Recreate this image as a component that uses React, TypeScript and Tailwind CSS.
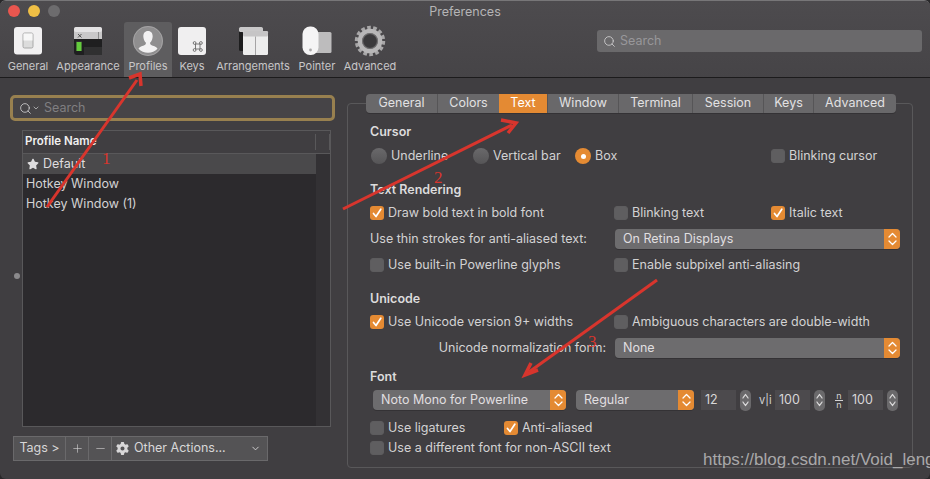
import React from "react";
import { Search, ChevronDown, Plus, Minus } from "lucide-react";
import { FaGear, FaStar } from "react-icons/fa6";

const Updown = ({ className = "" }: { className?: string }) => (
  <svg width="9" height="14" viewBox="0 0 9 14" fill="none" stroke="currentColor" strokeWidth="1.3" strokeLinecap="round" strokeLinejoin="round" className={className}>
    <path d="M1 5 L4.5 1.5 L8 5" />
    <path d="M1 9 L4.5 12.5 L8 9" />
  </svg>
);

const Check = () => (
  <svg width="10" height="10" viewBox="0 0 10 10" fill="none" stroke="#fff" strokeWidth="1.7" strokeLinecap="round" strokeLinejoin="round">
    <path d="M1.5 5.5 L4 8.5 L8.8 1.2" />
  </svg>
);

const Checkbox = ({ on, label }: { on?: boolean; label: string }) => (
  <div className="flex items-center gap-[4px] whitespace-nowrap">
    {on ? (
      <span className="flex h-[14px] w-[14px] items-center justify-center rounded-[3px] bg-[#e48a33]"><Check /></span>
    ) : (
      <span className="h-[14px] w-[14px] rounded-[3px] border border-[#5d5c5e] bg-[#5f5e60]" />
    )}
    <span>{label}</span>
  </div>
);

const Radio = ({ on, label }: { on?: boolean; label: string }) => (
  <div className="flex items-center gap-[4px] whitespace-nowrap">
    {on ? (
      <span className="flex h-[16px] w-[16px] items-center justify-center rounded-full bg-[#e58b33]"><span className="h-[5px] w-[5px] rounded-full bg-white" /></span>
    ) : (
      <span className="h-[16px] w-[16px] rounded-full bg-gradient-to-b from-[#6a696b] to-[#565557]" />
    )}
    <span>{label}</span>
  </div>
);

const Select = ({ label, className }: { label: string; className: string }) => (
  <div className={`flex h-[20px] items-stretch overflow-hidden rounded-[4px] bg-[#6d6c6e] shadow-[0_1px_0_#343235] ${className}`}>
    <span className="flex-1 self-center pl-[8px] text-[#e0dfe0]">{label}</span>
    <span className="flex w-[16px] items-center justify-center bg-[#e48a33] text-white"><Updown /></span>
  </div>
);

const Stepper = () => (
  <span className="flex h-[21px] w-[11px] items-center justify-center rounded-[5px] bg-[#6a696b] text-[#dddcdd]"><Updown className="scale-x-75" /></span>
);

const NumField = ({ value }: { value: string }) => (
  <span className="flex h-[20px] w-[35px] items-center bg-[#4c4a4d] pl-[4px] text-[#d8d7d8]">{value}</span>
);

const Heading = ({ children, className }: { children: React.ReactNode; className: string }) => (
  <div className={`h-[16px] font-semibold leading-[16px] text-[#dcdbdc] ${className}`}>{children}</div>
);

const GeneralIcon = () => (
  <svg width="32" height="32" viewBox="0 0 32 32">
    <rect x="2" y="2" width="28" height="27.5" rx="3" fill="#f1f0f1" />
    <rect x="11" y="8" width="10" height="15" rx="1.5" fill="#dcdcdc" stroke="#9a999a" strokeWidth="0.8" />
    <rect x="11.5" y="8.5" width="9" height="7" fill="#f7f7f7" />
  </svg>
);
const AppearanceIcon = () => (
  <svg width="32" height="32" viewBox="0 0 32 32">
    <rect x="2" y="2" width="28" height="28" rx="3" fill="#1f1f20" />
    <path d="M2 14 V5 a3 3 0 0 1 3-3 H27 a3 3 0 0 1 3 3 V14 Z" fill="#c9c8c9" />
    <rect x="2" y="2" width="28" height="5" rx="2" fill="#e4e3e4" />
    <path d="M6 9 L9.5 12.5 M9.5 9 L6 12.5" stroke="#444" strokeWidth="0.9" />
    <rect x="26" y="7" width="1" height="7" fill="#8a8a8a" />
    <rect x="4" y="16" width="6" height="10" fill="#2e2e2e" />
    <rect x="4.5" y="17" width="5" height="9" fill="#64cc3d" />
    <rect x="12" y="22" width="18" height="8" fill="#303031" />
  </svg>
);
const ProfilesIcon = () => (
  <svg width="32" height="32" viewBox="0 0 32 32">
    <circle cx="16" cy="16" r="15" fill="#8f8e8f" />
    <circle cx="16" cy="16" r="14.5" fill="none" stroke="#a8a7a8" strokeWidth="0.8" />
    <path d="M16 6 c3.6 0 5 3 4.6 6.2 c-0.3 2.5-1.3 4.3-2.4 5.3 c-0.5 1.6 0.6 2.6 2.6 3.2 c2.5 0.8 4 1.6 4.7 3 a13 13 0 0 1-19 0 c0.7-1.4 2.2-2.2 4.7-3 c2-0.6 3.1-1.6 2.6-3.2 c-1.1-1-2.1-2.8-2.4-5.3 C11 9 12.4 6 16 6 Z" fill="#f2f1f2" />
  </svg>
);
const KeysIcon = () => (
  <svg width="32" height="32" viewBox="0 0 32 32">
    <rect x="2" y="2" width="28" height="28" rx="3" fill="#f0eff0" />
    <g fill="none" stroke="#6a6a6a" strokeWidth="0.9">
      <rect x="19.5" y="19" width="4.5" height="5" />
      <circle cx="18.6" cy="18" r="1.4" />
      <circle cx="24.9" cy="18" r="1.4" />
      <circle cx="18.6" cy="25" r="1.4" />
      <circle cx="24.9" cy="25" r="1.4" />
    </g>
  </svg>
);
const ArrangementsIcon = () => (
  <svg width="32" height="32" viewBox="0 0 32 32">
    <rect x="2" y="2" width="24" height="24" rx="1.5" fill="#1d1d1e" />
    <rect x="2" y="2" width="24" height="5" rx="1.5" fill="#c9c8c9" />
    <rect x="6" y="6" width="25" height="24" rx="1.5" fill="#ededed" />
    <rect x="6" y="6" width="25" height="5.5" rx="1.5" fill="#c6c5c6" />
    <rect x="18" y="11.5" width="0.9" height="18.5" fill="#9d9c9d" />
  </svg>
);
const PointerIcon = () => (
  <svg width="32" height="32" viewBox="0 0 32 32">
    <rect x="14" y="7" width="16.5" height="21" rx="1.5" fill="#bdbcbd" />
    <rect x="1.5" y="1.5" width="16" height="28.5" rx="7.5" fill="#f5f4f5" />
    <circle cx="9.5" cy="25" r="1.4" fill="#a9a8a9" />
  </svg>
);
const AdvancedIcon = () => (
  <svg width="32" height="32" viewBox="0 0 32 32" fill="none">
    <circle cx="16" cy="16" r="13.2" stroke="#a8a7a8" strokeWidth="4" strokeDasharray="3.6 2.3" />
    <circle cx="16" cy="16" r="10" stroke="#b8b7b8" strokeWidth="4.6" />
    <circle cx="16" cy="16" r="7.5" stroke="#6f6e6f" strokeWidth="1.2" />
    <circle cx="16" cy="16" r="6.5" fill="#3b3a3c" />
  </svg>
);

const toolbar: { label: string; icon: React.ReactNode; w: string; active?: boolean }[] = [
  { label: "General", icon: <GeneralIcon />, w: "w-[48px]" },
  { label: "Appearance", icon: <AppearanceIcon />, w: "w-[72px]" },
  { label: "Profiles", icon: <ProfilesIcon />, w: "w-[48px]", active: true },
  { label: "Keys", icon: <KeysIcon />, w: "w-[40px]" },
  { label: "Arrangements", icon: <ArrangementsIcon />, w: "w-[82px]" },
  { label: "Pointer", icon: <PointerIcon />, w: "w-[46px]" },
  { label: "Advanced", icon: <AdvancedIcon />, w: "w-[60px]" },
];

const tabs: { label: string; w: string; active?: boolean }[] = [
  { label: "General", w: "w-[71px]" },
  { label: "Colors", w: "w-[62px]" },
  { label: "Text", w: "w-[48px]", active: true },
  { label: "Window", w: "w-[71px]" },
  { label: "Terminal", w: "w-[74px]" },
  { label: "Session", w: "w-[71px]" },
  { label: "Keys", w: "w-[50px]" },
  { label: "Advanced", w: "w-[83px]" },
];

export default function App() {
  return (
    <div className="relative h-[479px] w-[930px] overflow-hidden bg-[#29282a] font-['Inter','Liberation_Sans',sans-serif] text-[12.5px] text-[#d3d2d3]">
      <div className="flex h-full w-full flex-col overflow-hidden rounded-[6px] border-t border-[#777678] bg-[#403e41]">
        <header className="h-[77px] shrink-0 border-b border-[#1c1b1c] bg-gradient-to-b from-[#4d4b4e] to-[#464447]">
          <div className="relative flex h-[21px] items-center justify-center text-[12.5px] text-[#b5b4b5]">
            <div className="absolute left-[8px] top-[4px] flex gap-[8px]">
              <span className="h-[12px] w-[12px] rounded-full bg-[#e9564f]" />
              <span className="h-[12px] w-[12px] rounded-full bg-[#efbf45]" />
              <span className="h-[12px] w-[12px] rounded-full bg-[#6d6c6e]" />
            </div>
            <span className="pt-[2px]">Preferences</span>
          </div>
          <div className="flex h-[55px] pl-[4px]">
            {toolbar.map((t) => (
              <div key={t.label} className={`flex flex-col items-center whitespace-nowrap rounded-t-[3px] pt-[3px] text-[11px] text-[#c8c7c8] ${t.w} ${t.active ? "bg-[#5e5d5f]" : ""}`}>
                {t.icon}
                <span className="mt-[2px] leading-[14px]">{t.label}</span>
              </div>
            ))}
            <div className="ml-auto mr-[8px] mt-[8px] flex h-[22px] w-[325px] items-center rounded-[3px] bg-[#6a696b] pl-[6px] text-[#98979a]">
              <Search size={13} strokeWidth={1.6} className="text-[#cfcecf]" />
              <span className="ml-[4px]">Search</span>
            </div>
          </div>
        </header>

        <main className="flex flex-1">
          <aside className="relative w-[347px] shrink-0 pt-[17px]">
            <div className="ml-[10px] flex h-[26px] w-[325px] items-center rounded-[5px] border-[3px] border-[#98804f] bg-[#464447] pl-[6px] text-[#807f81]">
              <Search size={13} strokeWidth={1.5} className="text-[#d5d4d5]" />
              <ChevronDown size={8} strokeWidth={2} className="text-[#d5d4d5]" />
              <span className="ml-[4px]">Search</span>
            </div>
            <div className="ml-[22px] mt-[9px] w-[309px] border border-[#59585a]">
              <div className="flex h-[23px] items-center border-b border-[#59585a] bg-[#403e41] pl-[2px] text-[11.5px] font-semibold text-[#f0f0f0]">
                <span className="w-[291px]">Profile Name</span>
                <span className="h-[16px] w-[15px] border-l border-r border-[#59585a]" />
              </div>
              <div className="flex h-[272px] bg-[#2c2a2d]">
                <div className="w-[293px]">
                  <div className="flex h-[20px] items-center gap-[4px] bg-[#4a494b] pl-[4px] text-[#dedddf]">
                    <FaStar size={12} />
                    <span>Default</span>
                  </div>
                  <div className="flex h-[20px] items-center pl-[3px]">Hotkey Window</div>
                  <div className="flex h-[20px] items-center pl-[3px]">Hotkey Window (1)</div>
                </div>
                <div className="flex-1 bg-[#333134]" />
              </div>
            </div>
            <div className="ml-[13px] mt-[9px] flex h-[25px] w-[255px] items-stretch border border-[#6a696b] bg-[#545355] text-[#d8d7d8]">
              <span className="flex w-[52px] items-center justify-center border-r border-[#6a696b]">Tags &gt;</span>
              <span className="flex w-[23px] items-center justify-center border-r border-[#6a696b]"><Plus size={13} strokeWidth={1.1} /></span>
              <span className="flex w-[23px] items-center justify-center border-r border-[#6a696b]"><Minus size={13} strokeWidth={1.1} /></span>
              <span className="flex flex-1 items-center pl-[4px] pr-[6px]">
                <FaGear size={13} />
                <span className="ml-[5px] flex-1">Other Actions...</span>
                <ChevronDown size={11} strokeWidth={2} />
              </span>
            </div>
            <span className="absolute left-[14px] top-[195px] h-[6px] w-[6px] rounded-full bg-[#8b8a8c]" />
          </aside>

          <section className="mt-[25px] flex h-[365px] w-[566px] flex-col rounded-[4px] border border-[#59585a]">
            <div className="-mt-[10px] ml-[18px] flex h-[19px] w-[530px] overflow-hidden rounded-[4px] bg-[#69686a] text-[#e2e1e2] shadow-[0_1px_0_#343235]">
              {tabs.map((t, i) => (
                <span key={t.label} className={`flex items-center justify-center ${t.w} ${i > 0 ? "border-l border-[#565557]" : ""} ${t.active ? "border-none bg-[#e48a33] text-white" : ""}`}>{t.label}</span>
              ))}
            </div>
            <div className="pl-[22px]">
              <Heading className="mt-[11px]">Cursor</Heading>
              <div className="mt-[6px] flex h-[20px] items-center">
                <div className="ml-[1px] w-[102px]"><Radio label="Underline" /></div>
                <div className="w-[102px]"><Radio label="Vertical bar" /></div>
                <div className="w-[196px] pl-[0px]"><Radio on label="Box" /></div>
                <Checkbox label="Blinking cursor" />
              </div>
              <Heading className="mt-[16px]">Text Rendering</Heading>
              <div className="mt-[5px] flex h-[20px] items-center">
                <div className="w-[244px]"><Checkbox on label="Draw bold text in bold font" /></div>
                <div className="w-[157px]"><Checkbox label="Blinking text" /></div>
                <Checkbox on label="Italic text" />
              </div>
              <div className="mt-[6px] flex h-[20px] items-center">
                <span className="w-[245px]">Use thin strokes for anti-aliased text:</span>
                <Select label="On Retina Displays" className="w-[285px]" />
              </div>
              <div className="mt-[6px] flex h-[20px] items-center">
                <div className="w-[244px]"><Checkbox label="Use built-in Powerline glyphs" /></div>
                <Checkbox label="Enable subpixel anti-aliasing" />
              </div>
              <Heading className="mt-[16px]">Unicode</Heading>
              <div className="mt-[5px] flex h-[20px] items-center">
                <div className="w-[244px]"><Checkbox on label="Use Unicode version 9+ widths" /></div>
                <Checkbox label="Ambiguous characters are double-width" />
              </div>
              <div className="mt-[6px] flex h-[20px] items-center">
                <span className="w-[236px] text-right">Unicode normalization form:</span>
                <Select label="None" className="ml-[9px] w-[285px]" />
              </div>
              <Heading className="mt-[11px]">Font</Heading>
              <div className="mt-[5px] flex h-[20px] items-center">
                <Select label="Noto Mono for Powerline" className="ml-[3px] w-[193px]" />
                <Select label="Regular" className="ml-[10px] w-[118px]" />
                <div className="ml-[7px]"><NumField value="12" /></div>
                <div className="ml-[4px]"><Stepper /></div>
                <span className="ml-[8px] w-[12px] text-center text-[11px] leading-none">v|i</span>
                <div className="ml-[4px]"><NumField value="100" /></div>
                <div className="ml-[4px]"><Stepper /></div>
                <span className="ml-[8px] flex w-[12px] flex-col items-center text-[9px] leading-[8px]">
                  <span className="border-b border-[#d3d2d3] px-[1px]">n</span>
                  <span>n</span>
                </span>
                <div className="ml-[3px]"><NumField value="100" /></div>
                <div className="ml-[4px]"><Stepper /></div>
              </div>
              <div className="mt-[8px] flex h-[20px] items-center">
                <div className="w-[134px]"><Checkbox label="Use ligatures" /></div>
                <Checkbox on label="Anti-aliased" />
              </div>
              <div className="flex h-[20px] items-center">
                <Checkbox label="Use a different font for non-ASCII text" />
              </div>
            </div>
          </section>
        </main>
      </div>

      <svg width="930" height="479" className="pointer-events-none absolute left-0 top-0" fill="none" stroke="#d8352d" strokeWidth="3">
        <path d="M47 207 L137 80" />
        <path d="M129 78 L140 74 L141 86" strokeWidth="3.5" />
        <path d="M343 209 L512 125" />
        <path d="M501 120 L516 123 L508 133" strokeWidth="3.5" />
        <path d="M657 280 L529 372" />
        <path d="M538 370 L525 375 L531 363" strokeWidth="3.5" />
      </svg>
      <span className="absolute left-[102px] top-[149px] font-['Liberation_Serif',serif] text-[17px] leading-[20px] text-[#d8352d]">1</span>
      <span className="absolute left-[434px] top-[168px] font-['Liberation_Serif',serif] text-[17px] leading-[20px] text-[#d8352d]">2</span>
      <span className="absolute left-[588px] top-[332px] font-['Liberation_Serif',serif] text-[17px] leading-[20px] text-[#d8352d]">3</span>
      <span className="absolute left-[703px] top-[450px] font-['Liberation_Sans',sans-serif] text-[17px] leading-[20px] text-[#a9a8a9]">https://blog.csdn.net/Void_leng</span>
    </div>
  );
}
